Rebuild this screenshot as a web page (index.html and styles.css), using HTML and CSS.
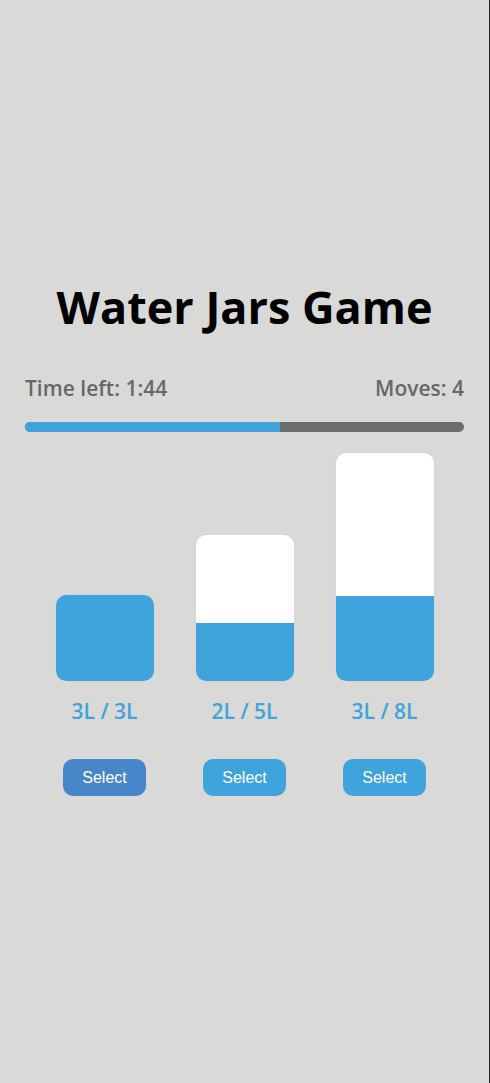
FILE: index.html
```html
<!DOCTYPE html>
<html lang="en">
<head>
<meta charset="utf-8">
<title>Water Jars Game</title>
<link rel="stylesheet" href="styles.css">
</head>
<body>
<div class="app">
  <h1 class="title">Water Jars Game</h1>
  <div class="stats">
    <span class="stat">Time left: 1:44</span>
    <span class="stat">Moves: 4</span>
  </div>
  <div class="progress"><div class="progress-fill" style="width: 58%"></div></div>
  <div class="jars">
    <div class="jar-col">
      <div class="jar" style="height: 86px"><div class="water" style="height: 100%"></div></div>
      <div class="jar-label">3L / 3L</div>
      <button class="select-btn active">Select</button>
    </div>
    <div class="jar-col">
      <div class="jar" style="height: 146px"><div class="water" style="height: 40%"></div></div>
      <div class="jar-label">2L / 5L</div>
      <button class="select-btn">Select</button>
    </div>
    <div class="jar-col">
      <div class="jar" style="height: 228px"><div class="water" style="height: 37.5%"></div></div>
      <div class="jar-label">3L / 8L</div>
      <button class="select-btn">Select</button>
    </div>
  </div>
</div>
</body>
</html>
```

FILE: styles.css
```css
html, body {
  margin: 0;
  padding: 0;
  background: #d9d9d8;
}
.app {
  box-sizing: border-box;
  min-height: 1083px;
  padding: 278px 25px 0;
  border-right: 1px solid #262626;
  display: flex;
  flex-direction: column;
  font-family: "Open Sans", "Noto Sans", sans-serif;
}
.title {
  margin: 0;
  text-align: center;
  font-size: 45px;
  line-height: 58px;
  font-weight: 700;
  color: #000;
}
.stats {
  display: flex;
  justify-content: space-between;
  margin-top: 38px;
  font-size: 21px;
  line-height: 28px;
  font-weight: 600;
  color: #676767;
}
.progress {
  margin-top: 20px;
  height: 10px;
  border-radius: 5px;
  background: #6b6d6e;
  overflow: hidden;
}
.progress-fill {
  height: 100%;
  background: #3fa3dc;
}
.jars {
  display: flex;
  justify-content: center;
  align-items: flex-end;
  gap: 42px;
  margin-top: 21px;
}
.jar-col {
  display: flex;
  flex-direction: column;
  align-items: center;
}
.jar {
  width: 98px;
  background: #fff;
  border-radius: 10px;
  overflow: hidden;
  display: flex;
  flex-direction: column;
  justify-content: flex-end;
  box-shadow: 0 0 0 1px rgba(200, 205, 230, 0.25);
}
.water {
  background: #3fa3dc;
}
.jar-label {
  margin-top: 16px;
  font-size: 21px;
  line-height: 28px;
  font-weight: 600;
  color: #3fa3dc;
}
.select-btn {
  margin-top: 34px;
  height: 37px;
  padding: 0 19px;
  border: none;
  border-radius: 10px;
  background: #3fa3dc;
  color: #fff;
  font-family: "Liberation Sans", Arial, sans-serif;
  font-size: 16px;
  cursor: pointer;
}
.select-btn.active {
  background: #4686c9;
}
```
